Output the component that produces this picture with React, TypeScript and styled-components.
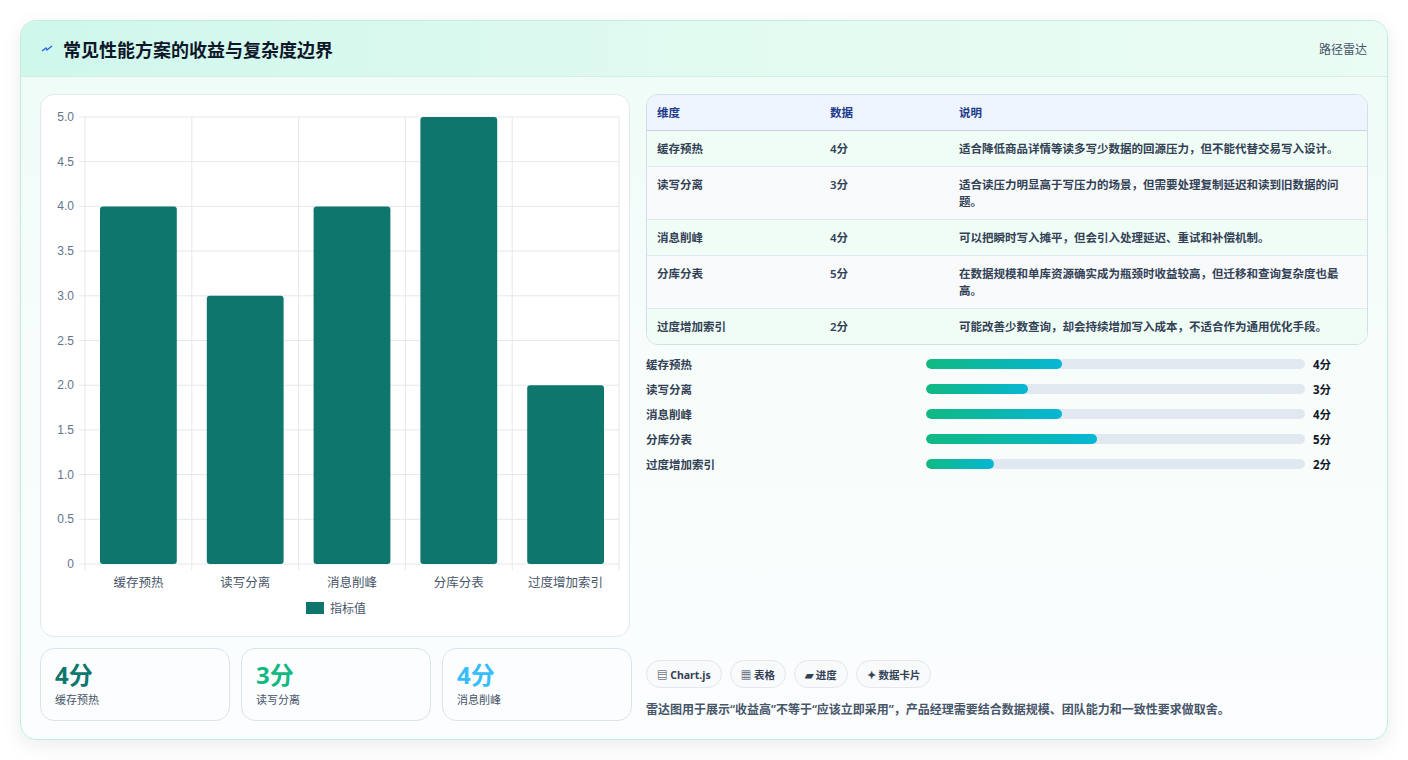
import React from 'react';
import styled, { createGlobalStyle } from 'styled-components';

const Global = createGlobalStyle`
  body {
    margin: 0;
    background: #fff;
    font-family: "Noto Sans", "Noto Sans CJK SC", sans-serif;
    color: #1e293b;
  }
`;

const Page = styled.div`
  padding: 20px 20px;
  height: 760px;
  box-sizing: border-box;
`;

const Card = styled.div`
  height: 720px;
  box-sizing: border-box;
  border: 1px solid #bfeee0;
  border-radius: 16px;
  background: linear-gradient(180deg, #eefcf6 0%, #f7fdfb 50%, #fbfdfe 100%);
  box-shadow: 0 6px 20px rgba(15, 23, 42, 0.08);
  overflow: hidden;
  display: flex;
  flex-direction: column;
`;

const Header = styled.div`
  height: 55px;
  display: flex;
  align-items: center;
  justify-content: space-between;
  padding: 0 20px;
  background: linear-gradient(90deg, #cff7ec 0%, #e4fbf1 60%, #eafcf3 100%);
  border-bottom: 1px solid #d3efe6;
`;

const Title = styled.h1`
  margin: 0;
  font-size: 18px;
  font-weight: 700;
  color: #0f172a;
  display: flex;
  align-items: center;
  gap: 10px;
`;

const HeaderLink = styled.span`
  font-size: 12px;
  color: #475569;
`;

const Body = styled.div`
  flex: 1;
  display: grid;
  grid-template-columns: 590px 1fr;
  gap: 16px;
  padding: 17px 19px 18px 19px;
`;

const LeftCol = styled.div`
  display: flex;
  flex-direction: column;
  gap: 11px;
`;

const ChartCard = styled.div`
  height: 543px;
  box-sizing: border-box;
  background: #fff;
  border: 1px solid #e2e8f0;
  border-radius: 14px;
`;

const Stats = styled.div`
  display: grid;
  grid-template-columns: repeat(3, 190px);
  gap: 11px;
`;

const StatCard = styled.div`
  height: 73px;
  box-sizing: border-box;
  border: 1px solid #dbe4ee;
  border-radius: 14px;
  background: #fbfdfe;
  padding: 10px 14px;
`;

const StatNum = styled.div<{ $color: string }>`
  font-size: 24px;
  font-weight: 700;
  line-height: 32px;
  color: ${p => p.$color};
`;

const StatLabel = styled.div`
  font-size: 11px;
  color: #475569;
`;

const RightCol = styled.div`
  display: flex;
  flex-direction: column;
  justify-content: space-between;
`;

const TableWrap = styled.div`
  border: 1px solid #d5dde8;
  border-radius: 12px;
  overflow: hidden;
  background: #fff;
`;

const Table = styled.table`
  width: 100%;
  border-collapse: collapse;
  font-size: 11.5px;
  th, td {
    text-align: left;
    padding: 9px 10px;
    vertical-align: top;
    line-height: 17px;
  }
  th {
    background: #eef5fe;
    color: #1e3a8a;
    font-weight: 700;
    border-bottom: 1px solid #cbd5e1;
  }
  td {
    color: #334155;
    font-weight: 600;
    border-bottom: 1px solid #e2e8f0;
  }
  tr:last-child td { border-bottom: none; }
  tbody tr:nth-child(odd) td { background: #f0fdf7; }
  tbody tr:nth-child(even) td { background: #f8fafc; }
`;

const Bars = styled.div`
  display: flex;
  flex-direction: column;
  gap: 8px;
  margin-top: 10px;
`;

const BarRow = styled.div`
  display: grid;
  grid-template-columns: 272px 379px 1fr;
  align-items: center;
  gap: 8px;
  font-size: 11.5px;
  font-weight: 600;
  color: #334155;
  height: 17px;
`;

const Track = styled.div`
  height: 10px;
  border-radius: 5px;
  background: #e2e8f0;
  overflow: hidden;
`;

const Fill = styled.div`
  height: 100%;
  border-radius: 5px;
  background: linear-gradient(90deg, #10b981, #06b6d4);
`;

const Value = styled.span`
  font-weight: 700;
  color: #0f172a;
`;

const Spacer = styled.div`
  flex: 1;
`;

const Tags = styled.div`
  display: flex;
  gap: 8px;
`;

const Tag = styled.span`
  height: 28px;
  box-sizing: border-box;
  padding: 0 10px;
  border: 1px solid #e2e8f0;
  border-radius: 14px;
  background: #f8fafc;
  display: flex;
  align-items: center;
  font-size: 10.5px;
  font-weight: 700;
  color: #334155;
`;

const Note = styled.p`
  margin: 12px 0 3px;
  font-size: 12px;
  font-weight: 600;
  color: #475569;
`;

const data = [
  { name: '缓存预热', v: 4, desc: '适合降低商品详情等读多写少数据的回源压力，但不能代替交易写入设计。' },
  { name: '读写分离', v: 3, desc: '适合读压力明显高于写压力的场景，但需要处理复制延迟和读到旧数据的问题。' },
  { name: '消息削峰', v: 4, desc: '可以把瞬时写入摊平，但会引入处理延迟、重试和补偿机制。' },
  { name: '分库分表', v: 5, desc: '在数据规模和单库资源确实成为瓶颈时收益较高，但迁移和查询复杂度也最高。' },
  { name: '过度增加索引', v: 2, desc: '可能改善少数查询，却会持续增加写入成本，不适合作为通用优化手段。' },
];

const fills = [36, 27, 36, 45, 18];

function BarChart() {
  const x0 = 44, x1 = 578, y0 = 22, y1 = 469;
  const step = (x1 - x0) / 5;
  const ticks = [0, 0.5, 1, 1.5, 2, 2.5, 3, 3.5, 4, 4.5, 5];
  const yOf = (v: number) => y1 - (v / 5) * (y1 - y0);
  return (
    <svg width="590" height="541" style={{ display: 'block' }}>
      {ticks.map(t => (
        <g key={t}>
          <line x1={x0 - 6} x2={x1} y1={yOf(t)} y2={yOf(t)} stroke="#e5e7eb" />
          <text x={33} y={yOf(t) + 4} fontSize="12" fill="#64748b" textAnchor="end" fontFamily="Liberation Sans, sans-serif">{t.toFixed(t === 0 ? 0 : 1)}</text>
        </g>
      ))}
      {[0, 1, 2, 3, 4, 5].map(i => (
        <line key={i} x1={x0 + i * step} x2={x0 + i * step} y1={y0} y2={y1 + 6} stroke="#e5e7eb" />
      ))}
      {data.map((d, i) => (
        <g key={d.name}>
          <rect x={x0 + i * step + 15} y={yOf(d.v)} width={step - 30} height={y1 - yOf(d.v)} rx="3" fill="#0f766e" />
          <text x={x0 + i * step + step / 2} y={y1 + 23} fontSize="12.5" fill="#475569" textAnchor="middle">{d.name}</text>
        </g>
      ))}
      <rect x={265} y={507} width={18} height={12} fill="#0f766e" />
      <text x={289} y={518} fontSize="12" fill="#475569">指标值</text>
    </svg>
  );
}

export default function App() {
  return (
    <Page>
      <Global />
      <Card>
        <Header>
          <Title>
            <svg width="12" height="8" viewBox="0 0 12 8"><path d="M1 6 L5 3 L6 5 L11 1" stroke="#2563eb" strokeWidth="1.4" fill="none" /></svg>
            常见性能方案的收益与复杂度边界
          </Title>
          <HeaderLink>路径雷达</HeaderLink>
        </Header>
        <Body>
          <LeftCol>
            <ChartCard><BarChart /></ChartCard>
            <Stats>
              <StatCard><StatNum $color="#0f766e">4分</StatNum><StatLabel>缓存预热</StatLabel></StatCard>
              <StatCard><StatNum $color="#10b981">3分</StatNum><StatLabel>读写分离</StatLabel></StatCard>
              <StatCard><StatNum $color="#38bdf8">4分</StatNum><StatLabel>消息削峰</StatLabel></StatCard>
            </Stats>
          </LeftCol>
          <RightCol>
            <div>
              <TableWrap>
                <Table>
                  <colgroup>
                    <col style={{ width: 173 }} />
                    <col style={{ width: 129 }} />
                    <col />
                  </colgroup>
                  <thead>
                    <tr><th>维度</th><th>数据</th><th>说明</th></tr>
                  </thead>
                  <tbody>
                    {data.map(d => (
                      <tr key={d.name}><td>{d.name}</td><td>{d.v}分</td><td>{d.desc}</td></tr>
                    ))}
                  </tbody>
                </Table>
              </TableWrap>
              <Bars>
                {data.map((d, i) => (
                  <BarRow key={d.name}>
                    <span>{d.name}</span>
                    <Track><Fill style={{ width: `${fills[i]}%` }} /></Track>
                    <Value>{d.v}分</Value>
                  </BarRow>
                ))}
              </Bars>
            </div>
            <Spacer />
            <div>
              <Tags>
                <Tag>▤ Chart.js</Tag>
                <Tag>▦ 表格</Tag>
                <Tag>▰ 进度</Tag>
                <Tag>✦ 数据卡片</Tag>
              </Tags>
              <Note>雷达图用于展示“收益高”不等于“应该立即采用”，产品经理需要结合数据规模、团队能力和一致性要求做取舍。</Note>
            </div>
          </RightCol>
        </Body>
      </Card>
    </Page>
  );
}
